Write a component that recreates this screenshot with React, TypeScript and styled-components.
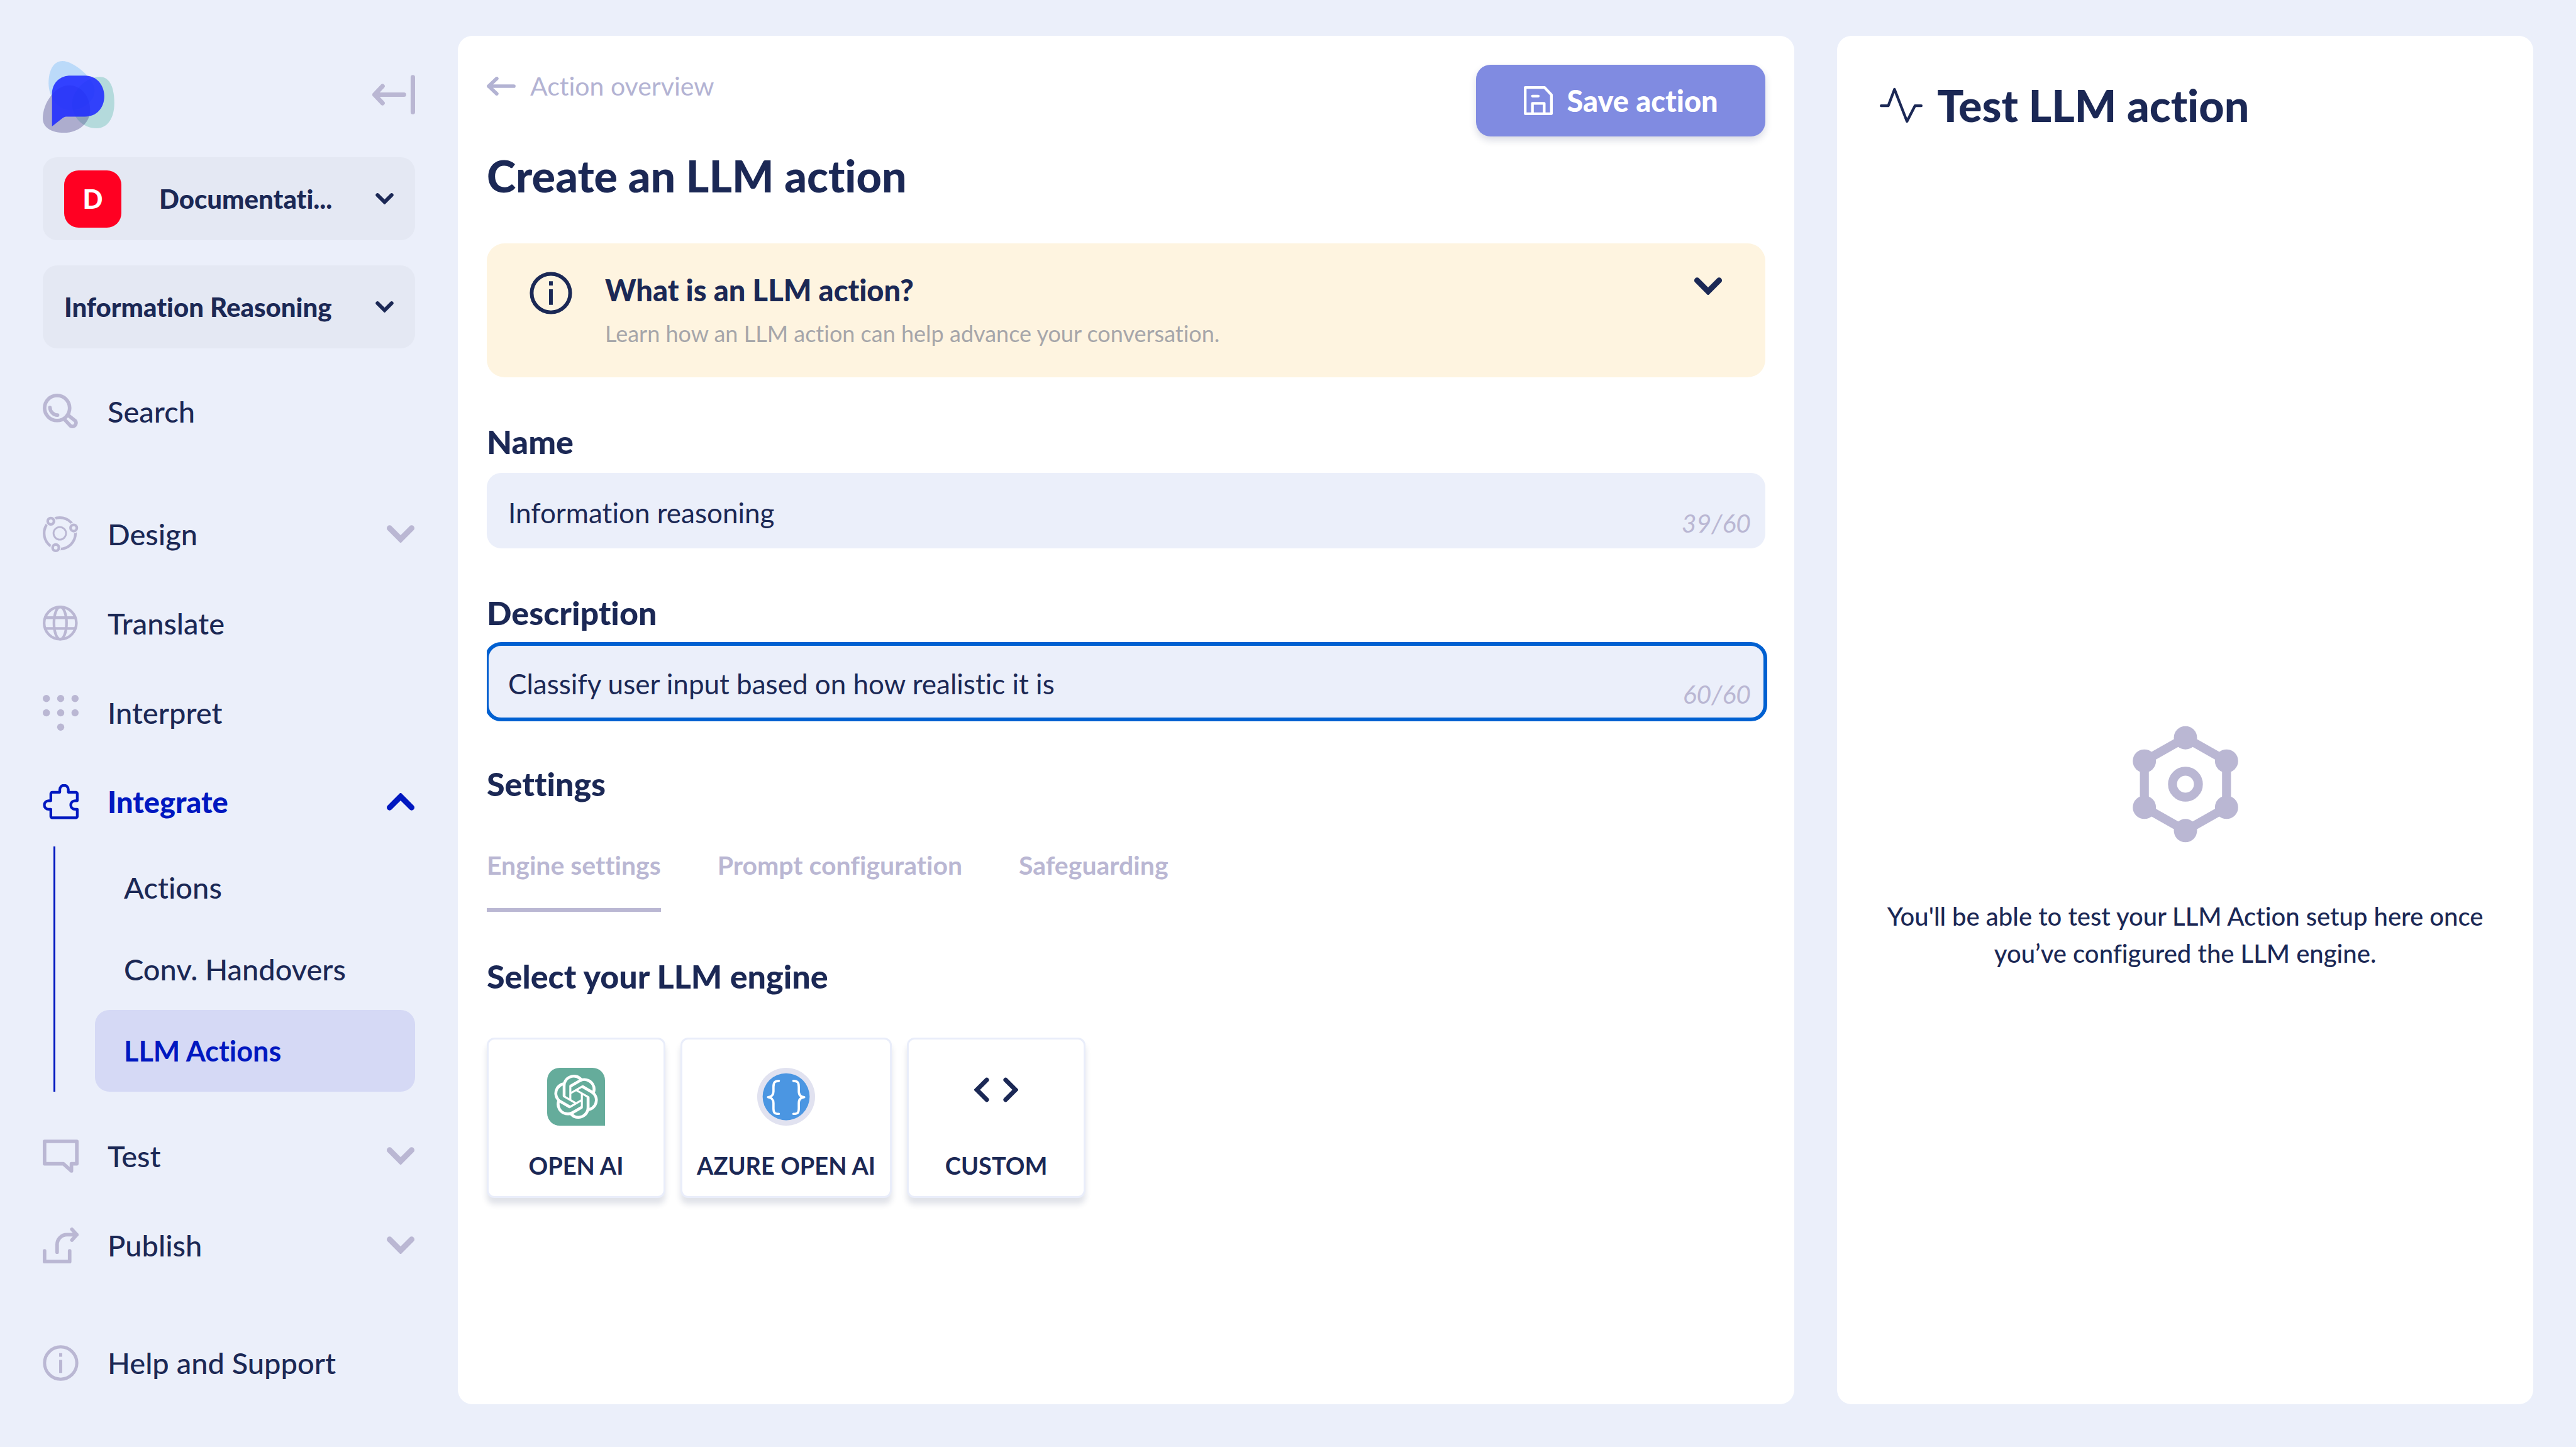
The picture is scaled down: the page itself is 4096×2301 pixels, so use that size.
import React from "react";
import styled, { createGlobalStyle } from "styled-components";
import { SiOpenai } from "react-icons/si";

const ink = "#1b2855";
const blue = "#0018c0";
const mauve = "#bab7d3";
const canvas = "#ebeffa";

const GlobalStyle = createGlobalStyle`
  *, *::before, *::after { box-sizing: border-box; }
  body {
    margin: 0;
    background: ${canvas};
    color: ${ink};
    font-family: Lato, "Open Sans", sans-serif;
    font-size: 44px;
    font-variant-ligatures: none;
  }
  button, input, select { font: inherit; font-variant-ligatures: none; color: inherit; }
  button { border: 0; background: none; padding: 0; cursor: pointer; }
  a { color: inherit; text-decoration: none; }
  h1, h2, p, ul { margin: 0; padding: 0; }
  ul { list-style: none; }
  svg { display: block; flex: none; }
`;

/* ---------- page ---------- */

const Page = styled.div`
  display: grid;
  grid-template-columns: 592px minmax(0, 48fr) minmax(0, 25fr);
  gap: 68px;
  min-height: 100vh;
  padding: 57px 68px;
`;

const Panel = styled.section`
  margin-bottom: 11px;
  background: #fff;
  border-radius: 23px;
`;

/* ---------- sidebar ---------- */

const Sidebar = styled.aside`
  display: flex;
  flex-direction: column;
  padding-top: 40px;
`;

const SidebarTop = styled.div`
  display: flex;
  justify-content: space-between;
  align-items: flex-start;
  height: 153px;
`;

const CollapseButton = styled.button`
  color: ${mauve};
  margin-top: 22px;
`;

const Switchers = styled.div`
  display: grid;
  gap: 40px;
`;

const Switcher = styled.label`
  display: flex;
  align-items: center;
  height: 132px;
  padding: 0 34px;
  border-radius: 23px;
  background: #e4e8f3;
`;

const Avatar = styled.span`
  display: grid;
  place-items: center;
  flex: none;
  width: 91px;
  height: 91px;
  margin-right: 60px;
  border-radius: 23px;
  background: #ff0022;
  color: #fff;
  font-size: 42px;
  font-weight: 900;
`;

const SwitcherSelect = styled.select`
  appearance: none;
  flex: 1;
  min-width: 0;
  border: 0;
  padding: 0;
  background: none;
  font-size: 42px;
  line-height: 56px;
  font-weight: 900;
`;

const NavGroup = styled.ul<{ $gap: number }>`
  margin-top: ${(p) => p.$gap}px;
`;

const NavLink = styled.a<{ $active?: boolean }>`
  display: flex;
  align-items: center;
  height: 142px;
  color: ${(p) => (p.$active ? blue : ink)};
  font-size: 47px;
  line-height: 60px;
  font-weight: ${(p) => (p.$active ? 900 : 500)};
`;

const NavIcon = styled.span<{ $active?: boolean }>`
  flex: none;
  width: 103px;
  color: ${(p) => (p.$active ? blue : mauve)};
`;

const NavText = styled.span`
  flex: 1;
`;

const NavChevron = styled.span<{ $active?: boolean }>`
  color: ${(p) => (p.$active ? blue : mauve)};
  transform: ${(p) => (p.$active ? "rotate(180deg)" : "none")};
`;

const SubNav = styled.ul`
  margin-left: 17px;
  padding-left: 63px;
  border-left: 3px solid ${blue};
`;

const SubLink = styled.a<{ $active?: boolean }>`
  display: flex;
  align-items: center;
  height: 130px;
  padding: 0 46px;
  border-radius: 23px;
  background: ${(p) => (p.$active ? "#d5d9f5" : "transparent")};
  color: ${(p) => (p.$active ? blue : ink)};
  font-size: ${(p) => (p.$active ? 45 : 47)}px;
  line-height: 60px;
  font-weight: ${(p) => (p.$active ? 700 : 500)};
`;

/* ---------- main panel ---------- */

const Editor = styled(Panel)`
  padding: 46px;
`;

const EditorHeader = styled.header`
  display: flex;
  justify-content: space-between;
  align-items: flex-start;
`;

const BackLink = styled.a`
  display: flex;
  align-items: center;
  gap: 23px;
  margin-bottom: 68px;
  color: #b3b3d3;
  font-size: 41px;
  line-height: 68px;
`;

const Title = styled.h1`
  font-size: 70px;
  line-height: 80px;
  font-weight: 900;
`;

const SaveButton = styled.button`
  display: flex;
  align-items: center;
  justify-content: center;
  gap: 23px;
  width: 460px;
  height: 114px;
  border-radius: 23px;
  background: #808be1;
  color: #fff;
  font-size: 47px;
  font-weight: 900;
  box-shadow: 0 6px 12px rgba(27, 40, 85, 0.16);
`;

const InfoCard = styled.button`
  display: flex;
  align-items: flex-start;
  width: 100%;
  height: 213px;
  margin-top: 68px;
  padding: 45px 68px 0;
  border-radius: 28px;
  background: #fef4e0;
  text-align: left;
`;

const InfoText = styled.span`
  display: grid;
  flex: 1;
  padding-left: 52px;
`;

const InfoTitle = styled.span`
  font-size: 47px;
  line-height: 58px;
  font-weight: 900;
`;

const InfoHint = styled.span`
  margin-top: 12px;
  color: #a6a6aa;
  font-size: 36px;
  line-height: 56px;
`;

const InfoChevron = styled.span`
  padding-top: 9px;
`;

const Field = styled.div`
  margin-top: 68px;
  clip-path: inset(-8px -8px -8px 0);
`;

const FieldLabel = styled.label`
  display: block;
  margin-bottom: 16px;
  font-size: 52px;
  line-height: 68px;
  font-weight: 900;
`;

const FieldBox = styled.div<{ $focused?: boolean }>`
  display: flex;
  height: 120px;
  padding: 0 23px 0 34px;
  border-radius: 23px;
  background: ${canvas};
  outline: ${(p) => (p.$focused ? "6px solid #0060d1" : "none")};
  outline-offset: -3px;
`;

const TextInput = styled.input`
  flex: 1;
  min-width: 0;
  border: 0;
  outline: 0;
  padding: 6px 0 0;
  background: none;
  font-size: 44px;
`;

const Counter = styled.span`
  align-self: flex-end;
  padding-bottom: 12px;
  color: ${mauve};
  font-size: 41px;
  line-height: 56px;
  font-style: italic;
`;

const SectionTitle = styled.h2`
  margin-top: 68px;
  font-size: 52px;
  line-height: 68px;
  font-weight: 900;
`;

const Tabs = styled.div`
  display: flex;
  gap: 90px;
  margin-top: 68px;
`;

const Tab = styled.button<{ $active?: boolean }>`
  height: 102px;
  padding-bottom: 40px;
  border-bottom: 6px solid ${(p) => (p.$active ? mauve : "transparent")};
  color: ${mauve};
  font-size: 41px;
  line-height: 56px;
  font-weight: 700;
`;

const Engines = styled.div`
  display: flex;
  gap: 24px;
  margin-top: 64px;
`;

const EngineCard = styled.button`
  display: flex;
  flex-direction: column;
  align-items: center;
  justify-content: space-between;
  min-width: 284px;
  height: 255px;
  padding: 45px 23px 21px;
  border: 3px solid #e9edfa;
  border-radius: 12px;
  background: #fff;
  font-size: 38px;
  line-height: 56px;
  font-weight: 700;
  box-shadow: 0 10px 10px rgba(27, 40, 85, 0.13);
`;

const EngineArt = styled.span`
  display: flex;
  align-items: center;
  height: 92px;
`;

const CodeArt = styled.span`
  padding-top: 15px;
`;

const OpenAiBadge = styled.span`
  display: grid;
  place-items: center;
  width: 92px;
  height: 92px;
  border-radius: 20px 20px 0 20px;
  background: #65ac9b;
  color: #fff;
`;

/* ---------- test panel ---------- */

const TestPanel = styled(Panel)`
  display: flex;
  flex-direction: column;
  padding: 70px 68px 68px;
`;

const TestHeader = styled.header`
  display: flex;
  align-items: center;
  gap: 23px;
`;

const TestEmpty = styled.div`
  display: flex;
  flex: 1;
  flex-direction: column;
  align-items: center;
  justify-content: center;
  gap: 88px;
  padding-top: 328px;
  color: ${mauve};
`;

const TestMessage = styled.p`
  color: ${ink};
  font-size: 40px;
  line-height: 59px;
  font-weight: 500;
  text-align: center;
`;

/* ---------- drawings ---------- */

type DrawingProps = { w: number; h: number; box: string; stroke?: number; children: React.ReactNode };

const Drawing = ({ w, h, box, stroke = 8, children }: DrawingProps) => (
  <svg
    width={w}
    height={h}
    viewBox={box}
    fill="none"
    stroke="currentColor"
    strokeWidth={stroke}
    strokeLinecap="round"
    strokeLinejoin="round"
    aria-hidden="true"
  >
    {children}
  </svg>
);

const Logo = () => (
  <svg width="114" height="114" viewBox="48 47 480 480" role="img" aria-label="Home">
    <path fill="#4ba9f7" fillOpacity=".3" d="M180 47C250 47 395 160 395 245C395 315 320 375 235 375C140 375 87 280 87 195C87 110 120 47 180 47Z" />
    <path fill="#34a999" fillOpacity=".3" d="M430 153C500 153 527 230 527 330C527 430 480 497 410 497C310 497 245 420 245 335C245 240 340 153 430 153Z" />
    <path fill="#504a8c" fillOpacity=".4" d="M225 210C310 210 365 290 365 375C365 460 290 527 190 527C100 527 48 490 48 430C48 330 130 210 225 210Z" />
    <path fill="#1f2bff" fillOpacity=".88" d="M110 485V270C110 190 165 145 235 145H330C410 145 460 210 460 282C460 360 410 420 330 420H205C192 420 184 428 170 438Z" />
  </svg>
);

const CollapseIcon = () => (
  <Drawing w={68} h={63} box="0 0 96 88" stroke={10}>
    <path d="M91 5V83M71 44H5M23 25L5 44L23 63" />
  </Drawing>
);

const Chevron = ({ small }: { small?: boolean }) => (
  <Drawing w={small ? 29 : 46} h={small ? 18 : 28} box="0 0 64 40" stroke={13}>
    <path d="M7 7L32 32L57 7" strokeLinejoin="miter" />
  </Drawing>
);

const SearchIcon = () => (
  <Drawing w={57} h={57} box="0 0 80 80">
    <circle cx="32" cy="32" r="28" />
    <path d="M16 31A18 18 0 0 0 33 48M49 58L62 72A8 8 0 0 0 73 61L58 49" />
  </Drawing>
);

const DesignIcon = () => (
  <Drawing w={57} h={57} box="0 0 80 80" stroke={6}>
    <circle cx="38" cy="38" r="35" />
    <circle cx="38" cy="38" r="14" strokeWidth="4" />
    <g fill={canvas} stroke={canvas}>
      <circle cx="18" cy="11" r="9" />
      <circle cx="69" cy="26" r="9" />
      <circle cx="29" cy="70" r="9" />
    </g>
    <circle cx="18" cy="11" r="7" />
    <circle cx="69" cy="26" r="7" />
    <circle cx="29" cy="70" r="7" />
  </Drawing>
);

const GlobeIcon = () => (
  <Drawing w={57} h={57} box="0 0 80 80" stroke={6}>
    <circle cx="39" cy="39" r="36" />
    <ellipse cx="39" cy="39" rx="14" ry="36" />
    <path d="M6 27H72M6 51H72" />
  </Drawing>
);

const DotsIcon = () => (
  <Drawing w={57} h={57} box="0 0 80 80" stroke={0}>
    {[[8, 8], [40, 8], [72, 8], [8, 40], [40, 40], [72, 40], [40, 72]].map(([x, y]) => (
      <circle key={`${x}-${y}`} cx={x} cy={y} r="8" fill="currentColor" />
    ))}
  </Drawing>
);

const PuzzleIcon = () => (
  <Drawing w={57} h={57} box="0 0 80 80" stroke={6}>
    <path d="M18 37V21A3 3 0 0 1 21 18H38V12A9 9 0 0 1 57 12V18H74A3 3 0 0 1 77 21V37H72A9.500 9.500 0 0 0 72 56H77V72A3 3 0 0 1 74 75H21A3 3 0 0 1 18 72V56H13A9.500 9.500 0 0 1 13 37Z" />
  </Drawing>
);

const SpeechIcon = () => (
  <Drawing w={57} h={57} box="0 0 80 80">
    <path d="M4 7H76V57H64V73L46 57H4Z" />
  </Drawing>
);

const PublishIcon = () => (
  <Drawing w={57} h={57} box="0 0 80 80">
    <path d="M4 52V76H60V52M32 55V38A22 22 0 0 1 54 16H76M65 4L76 16L65 28" />
  </Drawing>
);

const InfoIcon = ({ size }: { size: number }) => (
  <Drawing w={size} h={size} box="0 0 80 80" stroke={7}>
    <circle cx="40" cy="40" r="36" />
    <path strokeLinecap="butt" d="M40 18V26M40 33V62" />
  </Drawing>
);

const BackIcon = () => (
  <Drawing w={46} h={30} box="0 0 64 42" stroke={8}>
    <path d="M60 21H4M22 4L4 21L22 38" />
  </Drawing>
);

const SaveIcon = () => (
  <Drawing w={46} h={46} box="0 0 64 64" stroke={6}>
    <path d="M3 3H46L61 19V61H3ZM19 61V38H45V61M19 22H32" />
  </Drawing>
);

const PulseIcon = () => (
  <Drawing w={68} h={57} box="0 0 96 80" stroke={6}>
    <path d="M3 41H19L33 4L61 76L79 41H93" />
  </Drawing>
);

const EngineIcon = () => (
  <Drawing w={168} h={186} box="0 0 236 262" stroke={20}>
    <path d="M118 27L210 79V183L118 235L26 183V79Z" />
    <circle cx="118" cy="131" r="29" />
    <g fill="currentColor" stroke="none">
      {[[118, 27], [210, 79], [210, 183], [118, 235], [26, 183], [26, 79]].map(([x, y]) => (
        <circle key={`${x}-${y}`} cx={x} cy={y} r="26" />
      ))}
    </g>
  </Drawing>
);

const AzureIcon = () => (
  <Drawing w={92} h={92} box="0 0 128 128" stroke={5}>
    <circle cx="64" cy="64" r="64" fill="#e1e2f0" stroke="none" />
    <circle cx="64" cy="64" r="52" fill="#4b96e2" stroke="none" />
    <g stroke="#fff">
      <path d="M48 29C38 29 36 33 36 42V52C36 60 32 64 24 65C32 66 36 70 36 78V90C36 99 38 102 48 102" />
      <path d="M80 29C90 29 92 33 92 42V52C92 60 96 64 104 65C96 66 92 70 92 78V90C92 99 90 102 80 102" />
    </g>
  </Drawing>
);

const CodeIcon = () => (
  <Drawing w={70} h={40} box="0 0 98 56" stroke={10}>
    <path d="M28 6L6 28L28 50M70 6L92 28L70 50" strokeLinejoin="miter" />
  </Drawing>
);

/* ---------- parts ---------- */

type NavItemProps = { icon: React.ReactNode; text: string; expandable?: boolean; active?: boolean };

const NavItem = ({ icon, text, expandable, active }: NavItemProps) => (
  <NavLink href="#" $active={active}>
    <NavIcon $active={active}>{icon}</NavIcon>
    <NavText>{text}</NavText>
    {expandable && (
      <NavChevron $active={active}>
        <Chevron />
      </NavChevron>
    )}
  </NavLink>
);

type TextFieldProps = { id: string; label: string; value: string; count: string; focused?: boolean };

const TextField = ({ id, label, value, count, focused }: TextFieldProps) => (
  <Field>
    <FieldLabel htmlFor={id}>{label}</FieldLabel>
    <FieldBox $focused={focused}>
      <TextInput id={id} type="text" defaultValue={value} />
      <Counter>{count}</Counter>
    </FieldBox>
  </Field>
);

export default function App() {
  return (
    <>
      <GlobalStyle />
      <Page>
        <Sidebar>
          <SidebarTop>
            <Logo />
            <CollapseButton type="button" aria-label="Collapse menu">
              <CollapseIcon />
            </CollapseButton>
          </SidebarTop>
          <Switchers>
            <Switcher>
              <Avatar>D</Avatar>
              <SwitcherSelect aria-label="Workspace">
                <option>Documentati...</option>
              </SwitcherSelect>
              <Chevron small />
            </Switcher>
            <Switcher>
              <SwitcherSelect aria-label="Project">
                <option>Information Reasoning</option>
              </SwitcherSelect>
              <Chevron small />
            </Switcher>
          </Switchers>
          <nav>
            <NavGroup $gap={29}>
              <li><NavItem icon={<SearchIcon />} text="Search" /></li>
            </NavGroup>
            <NavGroup $gap={53}>
              <li><NavItem icon={<DesignIcon />} text="Design" expandable /></li>
              <li><NavItem icon={<GlobeIcon />} text="Translate" /></li>
              <li><NavItem icon={<DotsIcon />} text="Interpret" /></li>
              <li>
                <NavItem icon={<PuzzleIcon />} text="Integrate" expandable active />
                <SubNav>
                  <li><SubLink href="#">Actions</SubLink></li>
                  <li><SubLink href="#">Conv. Handovers</SubLink></li>
                  <li><SubLink href="#" $active>LLM Actions</SubLink></li>
                </SubNav>
              </li>
            </NavGroup>
            <NavGroup $gap={31}>
              <li><NavItem icon={<SpeechIcon />} text="Test" expandable /></li>
              <li><NavItem icon={<PublishIcon />} text="Publish" expandable /></li>
            </NavGroup>
            <NavGroup $gap={45}>
              <li><NavItem icon={<InfoIcon size={57} />} text="Help and Support" /></li>
            </NavGroup>
          </nav>
        </Sidebar>

        <Editor as="main">
          <EditorHeader>
            <div>
              <BackLink href="#">
                <BackIcon />
                Action overview
              </BackLink>
              <Title>Create an LLM action</Title>
            </div>
            <SaveButton type="button">
              <SaveIcon />
              Save action
            </SaveButton>
          </EditorHeader>

          <InfoCard type="button" aria-expanded="false">
            <InfoIcon size={68} />
            <InfoText>
              <InfoTitle>What is an LLM action?</InfoTitle>
              <InfoHint>Learn how an LLM action can help advance your conversation.</InfoHint>
            </InfoText>
            <InfoChevron>
              <Chevron />
            </InfoChevron>
          </InfoCard>

          <TextField id="name" label="Name" value="Information reasoning" count="39/60" />
          <TextField
            id="description"
            label="Description"
            value="Classify user input based on how realistic it is"
            count="60/60"
            focused
          />

          <SectionTitle>Settings</SectionTitle>
          <Tabs role="tablist">
            <Tab type="button" role="tab" aria-selected="true" $active>Engine settings</Tab>
            <Tab type="button" role="tab" aria-selected="false">Prompt configuration</Tab>
            <Tab type="button" role="tab" aria-selected="false">Safeguarding</Tab>
          </Tabs>

          <SectionTitle>Select your LLM engine</SectionTitle>
          <Engines>
            <EngineCard type="button">
              <EngineArt>
                <OpenAiBadge>
                  <SiOpenai size={70} />
                </OpenAiBadge>
              </EngineArt>
              OPEN AI
            </EngineCard>
            <EngineCard type="button">
              <EngineArt>
                <AzureIcon />
              </EngineArt>
              AZURE OPEN AI
            </EngineCard>
            <EngineCard type="button">
              <CodeArt>
                <CodeIcon />
              </CodeArt>
              CUSTOM
            </EngineCard>
          </Engines>
        </Editor>

        <TestPanel as="aside">
          <TestHeader>
            <PulseIcon />
            <Title as="h2">Test LLM action</Title>
          </TestHeader>
          <TestEmpty>
            <EngineIcon />
            <TestMessage>You'll be able to test your LLM Action setup here once you’ve configured the LLM engine.</TestMessage>
          </TestEmpty>
        </TestPanel>
      </Page>
    </>
  );
}
